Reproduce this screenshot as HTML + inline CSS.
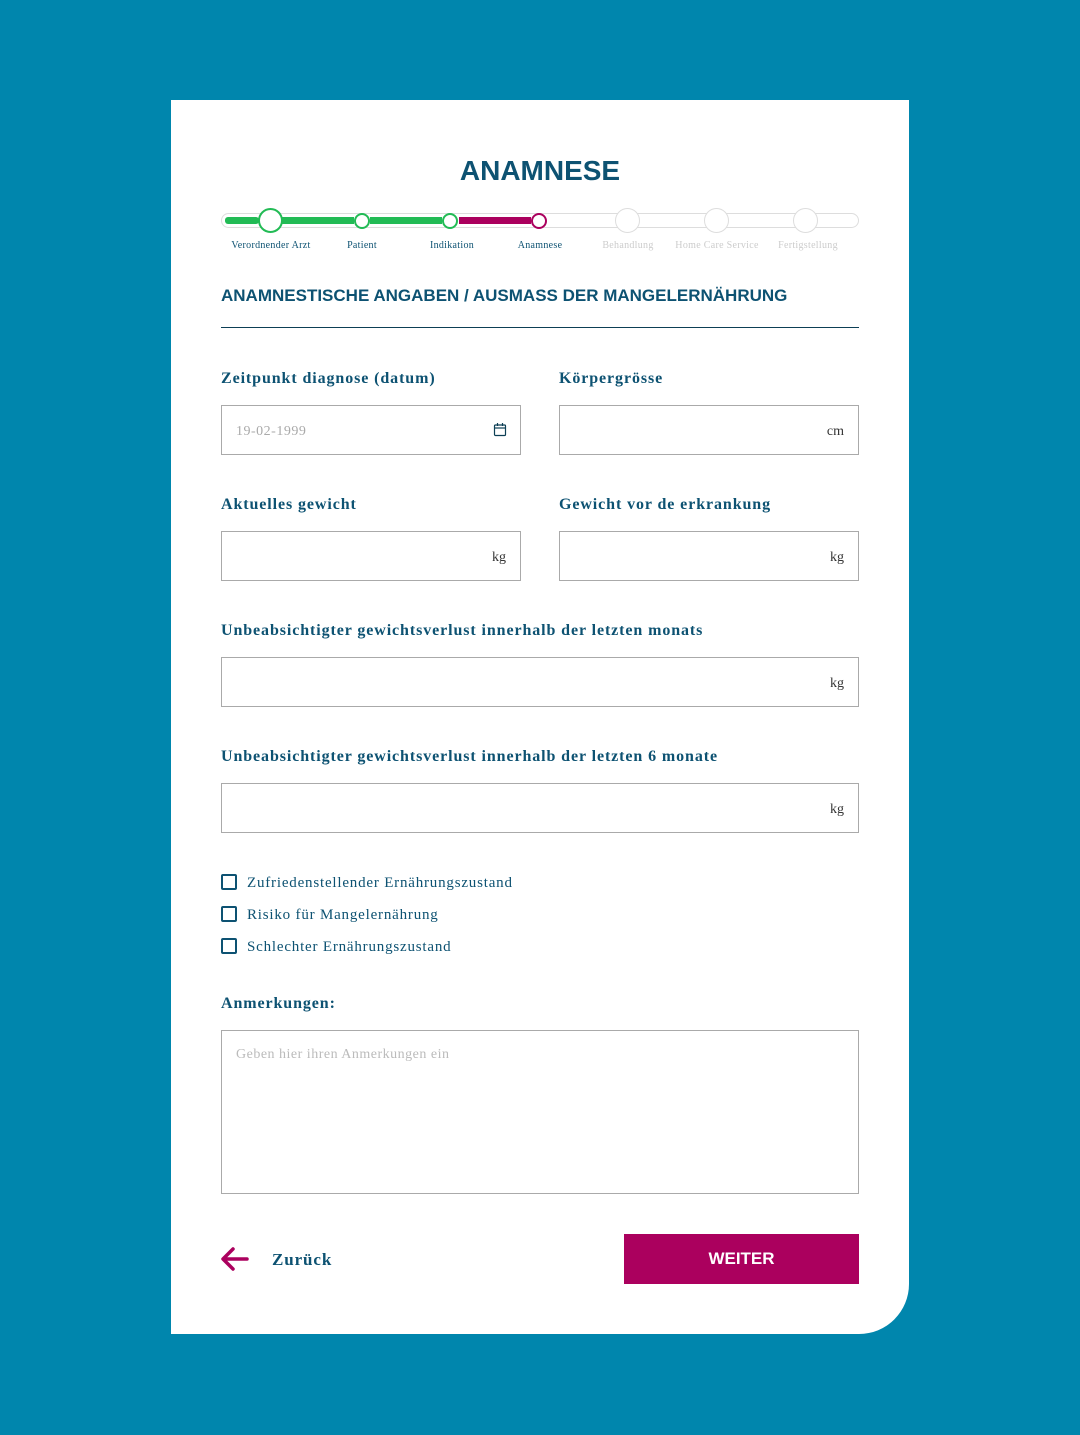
<!DOCTYPE html>
<html><head><meta charset="utf-8"><style>
*{margin:0;padding:0;box-sizing:border-box}
body{width:1080px;height:1435px;background:#0086ad;position:relative;overflow:hidden;font-family:"Liberation Serif",serif;color:#0d5272}
.card{position:absolute;left:171px;top:100px;width:738px;height:1234px;background:#fff;border-bottom-right-radius:50px}
.a{position:absolute}
.sans{font-family:"Liberation Sans",sans-serif;font-weight:bold}
.lbl{position:absolute;font-size:16px;font-weight:bold;white-space:nowrap;letter-spacing:0.9px}
.inp{position:absolute;border:1px solid #aaa;height:50px;background:#fff}
.unit{position:absolute;right:14px;top:18px;font-size:14px;color:#333}
.step{position:absolute;top:240px;font-size:10px;letter-spacing:0.3px;transform:translateX(-50%);white-space:nowrap}
.circ{position:absolute;border-radius:50%;background:#fff}
.cb{position:absolute;left:221px;width:16px;height:16px;border:2px solid #0d5272;border-radius:2px}
.cbt{position:absolute;left:247px;font-size:15px;white-space:nowrap;letter-spacing:0.8px}
</style></head><body>
<div class="card"></div>
<div class="a sans" style="left:0;width:1080px;text-align:center;top:155px;font-size:28px">ANAMNESE</div>

<div class="a" style="left:221px;top:213px;width:638px;height:15px;border:1px solid #ddd;border-radius:8px"></div>
<div class="a" style="left:225px;top:217px;width:34px;height:7px;background:#22bb55;border-radius:3px"></div>
<div class="a" style="left:282px;top:217px;width:72px;height:7px;background:#22bb55"></div>
<div class="a" style="left:370px;top:217px;width:72px;height:7px;background:#22bb55"></div>
<div class="a" style="left:459px;top:217px;width:72px;height:7px;background:#ab005e"></div>
<div class="circ" style="left:258px;top:208px;width:25px;height:25px;border:2px solid #22bb55"></div>
<div class="circ" style="left:354px;top:213px;width:16px;height:16px;border:2px solid #22bb55"></div>
<div class="circ" style="left:442px;top:213px;width:16px;height:16px;border:2px solid #22bb55"></div>
<div class="circ" style="left:531px;top:213px;width:16px;height:16px;border:2px solid #ab005e"></div>
<div class="circ" style="left:615px;top:208px;width:25px;height:25px;border:1px solid #ddd"></div>
<div class="circ" style="left:704px;top:208px;width:25px;height:25px;border:1px solid #ddd"></div>
<div class="circ" style="left:793px;top:208px;width:25px;height:25px;border:1px solid #ddd"></div>
<div class="step" style="left:271px">Verordnender Arzt</div>
<div class="step" style="left:362px">Patient</div>
<div class="step" style="left:452px">Indikation</div>
<div class="step" style="left:540px">Anamnese</div>
<div class="step" style="left:628px;color:#ccc">Behandlung</div>
<div class="step" style="left:717px;color:#ccc">Home Care Service</div>
<div class="step" style="left:808px;color:#ccc">Fertigstellung</div>

<div class="a sans" style="left:221px;top:286px;font-size:17px;white-space:nowrap">ANAMNESTISCHE ANGABEN / AUSMASS DER MANGELERNÄHRUNG</div>
<div class="a" style="left:221px;top:327px;width:638px;height:1px;background:#0d3f55"></div>

<div class="lbl" style="left:221px;top:370px">Zeitpunkt diagnose (datum)</div>
<div class="lbl" style="left:559px;top:370px">Körpergrösse</div>
<div class="inp" style="left:221px;top:405px;width:300px"><span class="a" style="left:14px;top:18px;font-size:14px;color:#aaa;letter-spacing:0.5px">19-02-1999</span>
<svg class="a" style="left:271px;top:16px" width="14" height="15" viewBox="0 0 14 15"><rect x="1.5" y="3" width="11" height="10.5" rx="1" fill="none" stroke="#0d3f55" stroke-width="1.2"/><line x1="1.5" y1="6" x2="12.5" y2="6" stroke="#0d3f55" stroke-width="1.2"/><line x1="4.5" y1="1" x2="4.5" y2="4" stroke="#0d3f55" stroke-width="1.2"/><line x1="9.5" y1="1" x2="9.5" y2="4" stroke="#0d3f55" stroke-width="1.2"/></svg></div>
<div class="inp" style="left:559px;top:405px;width:300px"><span class="unit">cm</span></div>

<div class="lbl" style="left:221px;top:496px">Aktuelles gewicht</div>
<div class="lbl" style="left:559px;top:496px">Gewicht vor de erkrankung</div>
<div class="inp" style="left:221px;top:531px;width:300px"><span class="unit">kg</span></div>
<div class="inp" style="left:559px;top:531px;width:300px"><span class="unit">kg</span></div>

<div class="lbl" style="left:221px;top:622px">Unbeabsichtigter gewichtsverlust innerhalb der letzten monats</div>
<div class="inp" style="left:221px;top:657px;width:638px"><span class="unit">kg</span></div>
<div class="lbl" style="left:221px;top:748px">Unbeabsichtigter gewichtsverlust innerhalb der letzten 6 monate</div>
<div class="inp" style="left:221px;top:783px;width:638px"><span class="unit">kg</span></div>

<div class="cb" style="top:874px"></div><div class="cbt" style="top:875px">Zufriedenstellender Ernährungszustand</div>
<div class="cb" style="top:906px"></div><div class="cbt" style="top:907px">Risiko für Mangelernährung</div>
<div class="cb" style="top:938px"></div><div class="cbt" style="top:939px">Schlechter Ernährungszustand</div>

<div class="lbl" style="left:221px;top:995px">Anmerkungen:</div>
<div class="inp" style="left:221px;top:1030px;width:638px;height:164px"><span class="a" style="left:14px;top:16px;font-size:14px;color:#bbb;letter-spacing:0.5px">Geben hier ihren Anmerkungen ein</span></div>

<svg class="a" style="left:220px;top:1245px" width="30" height="28" viewBox="0 0 30 28"><path d="M27 14H4M13 4L3 14L13 24" fill="none" stroke="#ab005e" stroke-width="3.5" stroke-linecap="round" stroke-linejoin="round"/></svg>
<div class="lbl" style="left:272px;top:1250px;font-size:17px">Zurück</div>
<div class="a sans" style="left:624px;top:1234px;width:235px;height:50px;background:#ab005e;color:#fff;font-size:17px;text-align:center;line-height:50px">WEITER</div>
</body></html>
